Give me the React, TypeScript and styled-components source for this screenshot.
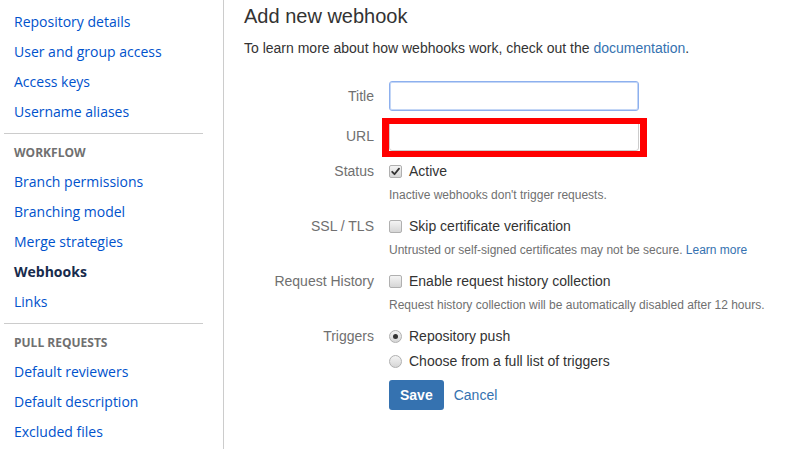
import React from "react";
import styled, { createGlobalStyle } from "styled-components";

const Global = createGlobalStyle`
  html, body { margin: 0; padding: 0; background: #fff; }
  body { font-family: "Liberation Sans", Arial, sans-serif; color: #333; }
  * { box-sizing: border-box; }
`;

const Page = styled.div`
  display: flex;
  width: 797px;
  height: 449px;
  overflow: hidden;
`;

const Sidebar = styled.nav`
  width: 224px;
  flex: none;
  border-right: 1px solid #ccc;
  padding: 7px 20px 0 4px;
  font-family: "Open Sans", "Noto Sans", sans-serif;
`;

const NavItem = styled.a<{ $active?: boolean }>`
  display: block;
  height: 30px;
  line-height: 30px;
  padding-left: 10px;
  font-size: 14px;
  text-decoration: none;
  white-space: nowrap;
  color: ${(p) => (p.$active ? "#172b4d" : "#0052cc")};
  font-weight: ${(p) => (p.$active ? 700 : 400)};
`;

const Divider = styled.hr`
  border: 0;
  height: 1px;
  background: #ccc;
  margin: 6px 0 9px 0;
`;

const NavHeading = styled.div`
  height: 20px;
  line-height: 20px;
  padding-left: 10px;
  margin-bottom: 4px;
  font-size: 12px;
  font-weight: 700;
  color: #707070;
  text-transform: uppercase;
`;

const Main = styled.main`
  flex: 1;
  padding: 1px 0 0 20px;
`;

const Title = styled.h2`
  margin: 0;
  font-size: 20px;
  font-weight: 400;
  line-height: 30px;
  color: #333;
`;

const Intro = styled.p`
  margin: 7px 0 0 0;
  font-size: 14px;
  line-height: 20px;
`;

const Link = styled.a`
  color: #3572b0;
  text-decoration: none;
`;

const Form = styled.form`
  margin-top: 23px;
`;

const FieldGroup = styled.div<{ $gap?: number }>`
  display: flex;
  align-items: center;
  margin-top: ${(p) => p.$gap ?? 0}px;
`;

const Label = styled.label`
  width: 130px;
  margin-right: 15px;
  flex: none;
  text-align: right;
  font-size: 14px;
  line-height: 20px;
  color: #707070;
`;

const TextInput = styled.input<{ $focused?: boolean }>`
  width: 250px;
  height: 30px;
  border: 1px solid ${(p) => (p.$focused ? "#8db0ee" : "#ccc")};
  box-shadow: ${(p) => (p.$focused ? "inset 0 0 0 1px #c3d6f6" : "none")};
  border-radius: 3px;
  padding: 4px 6px;
  font-size: 14px;
  font-family: inherit;
  background: #fff;
  outline: none;
`;

const Highlight = styled.span`
  position: relative;
  display: inline-block;
  &::after {
    content: "";
    position: absolute;
    left: -7px;
    right: -8px;
    top: -3px;
    bottom: -6px;
    border: 6px solid #ff0000;
    border-left-width: 7px;
    border-right-width: 7px;
    pointer-events: none;
  }
`;

const Choice = styled.span`
  display: inline-flex;
  align-items: center;
  font-size: 14px;
  line-height: 20px;
  color: #333;
`;

const Box = styled.span<{ $round?: boolean }>`
  width: 13px;
  height: 13px;
  margin-right: 7px;
  border: 1px solid #b0b0b0;
  border-radius: ${(p) => (p.$round ? "50%" : "2px")};
  background: linear-gradient(#f4f4f4, #d6d6d6);
  display: inline-flex;
  align-items: center;
  justify-content: center;
  flex: none;
`;

const Dot = styled.span`
  width: 5px;
  height: 5px;
  border-radius: 50%;
  background: #333;
`;

const Help = styled.div<{ $gap?: number }>`
  margin: ${(p) => p.$gap ?? 6}px 0 0 145px;
  font-size: 12px;
  line-height: 16px;
  color: #707070;
`;

const Buttons = styled.div`
  display: flex;
  align-items: center;
  margin: 9px 0 0 145px;
`;

const SaveButton = styled.button`
  height: 30px;
  padding: 0 11px;
  border: 0;
  border-radius: 3.01px;
  background: #3572b0;
  color: #fff;
  font-family: inherit;
  font-size: 14px;
  font-weight: 700;
`;

const CancelLink = styled.a`
  margin-left: 10px;
  font-size: 14px;
  color: #3572b0;
  text-decoration: none;
`;

const Check = () => (
  <svg width="9" height="9" viewBox="0 0 9 9">
    <path d="M1.2 4.8 L3.5 7.2 L8 1.6" fill="none" stroke="#333" strokeWidth="1.8" strokeLinecap="round" strokeLinejoin="round" />
  </svg>
);

export default function App() {
  return (
    <Page>
      <Global />
      <Sidebar>
        <NavItem>Repository details</NavItem>
        <NavItem>User and group access</NavItem>
        <NavItem>Access keys</NavItem>
        <NavItem>Username aliases</NavItem>
        <Divider />
        <NavHeading>Workflow</NavHeading>
        <NavItem>Branch permissions</NavItem>
        <NavItem>Branching model</NavItem>
        <NavItem>Merge strategies</NavItem>
        <NavItem $active>Webhooks</NavItem>
        <NavItem>Links</NavItem>
        <Divider />
        <NavHeading>Pull requests</NavHeading>
        <NavItem>Default reviewers</NavItem>
        <NavItem>Default description</NavItem>
        <NavItem>Excluded files</NavItem>
      </Sidebar>
      <Main>
        <Title>Add new webhook</Title>
        <Intro>
          To learn more about how webhooks work, check out the <Link>documentation</Link>.
        </Intro>
        <Form>
          <FieldGroup>
            <Label>Title</Label>
            <TextInput $focused />
          </FieldGroup>
          <FieldGroup $gap={10}>
            <Label>URL</Label>
            <Highlight>
              <TextInput />
            </Highlight>
          </FieldGroup>
          <FieldGroup $gap={10}>
            <Label>Status</Label>
            <Choice>
              <Box><Check /></Box>Active
            </Choice>
          </FieldGroup>
          <Help>Inactive webhooks don't trigger requests.</Help>
          <FieldGroup $gap={13}>
            <Label>SSL / TLS</Label>
            <Choice>
              <Box />Skip certificate verification
            </Choice>
          </FieldGroup>
          <Help>
            Untrusted or self-signed certificates may not be secure. <Link>Learn more</Link>
          </Help>
          <FieldGroup $gap={13}>
            <Label>Request History</Label>
            <Choice>
              <Box />Enable request history collection
            </Choice>
          </FieldGroup>
          <Help>Request history collection will be automatically disabled after 12 hours.</Help>
          <FieldGroup $gap={13}>
            <Label>Triggers</Label>
            <Choice>
              <Box $round><Dot /></Box>Repository push
            </Choice>
          </FieldGroup>
          <FieldGroup $gap={5}>
            <Label />
            <Choice>
              <Box $round />Choose from a full list of triggers
            </Choice>
          </FieldGroup>
          <Buttons>
            <SaveButton type="button">Save</SaveButton>
            <CancelLink>Cancel</CancelLink>
          </Buttons>
        </Form>
      </Main>
    </Page>
  );
}
